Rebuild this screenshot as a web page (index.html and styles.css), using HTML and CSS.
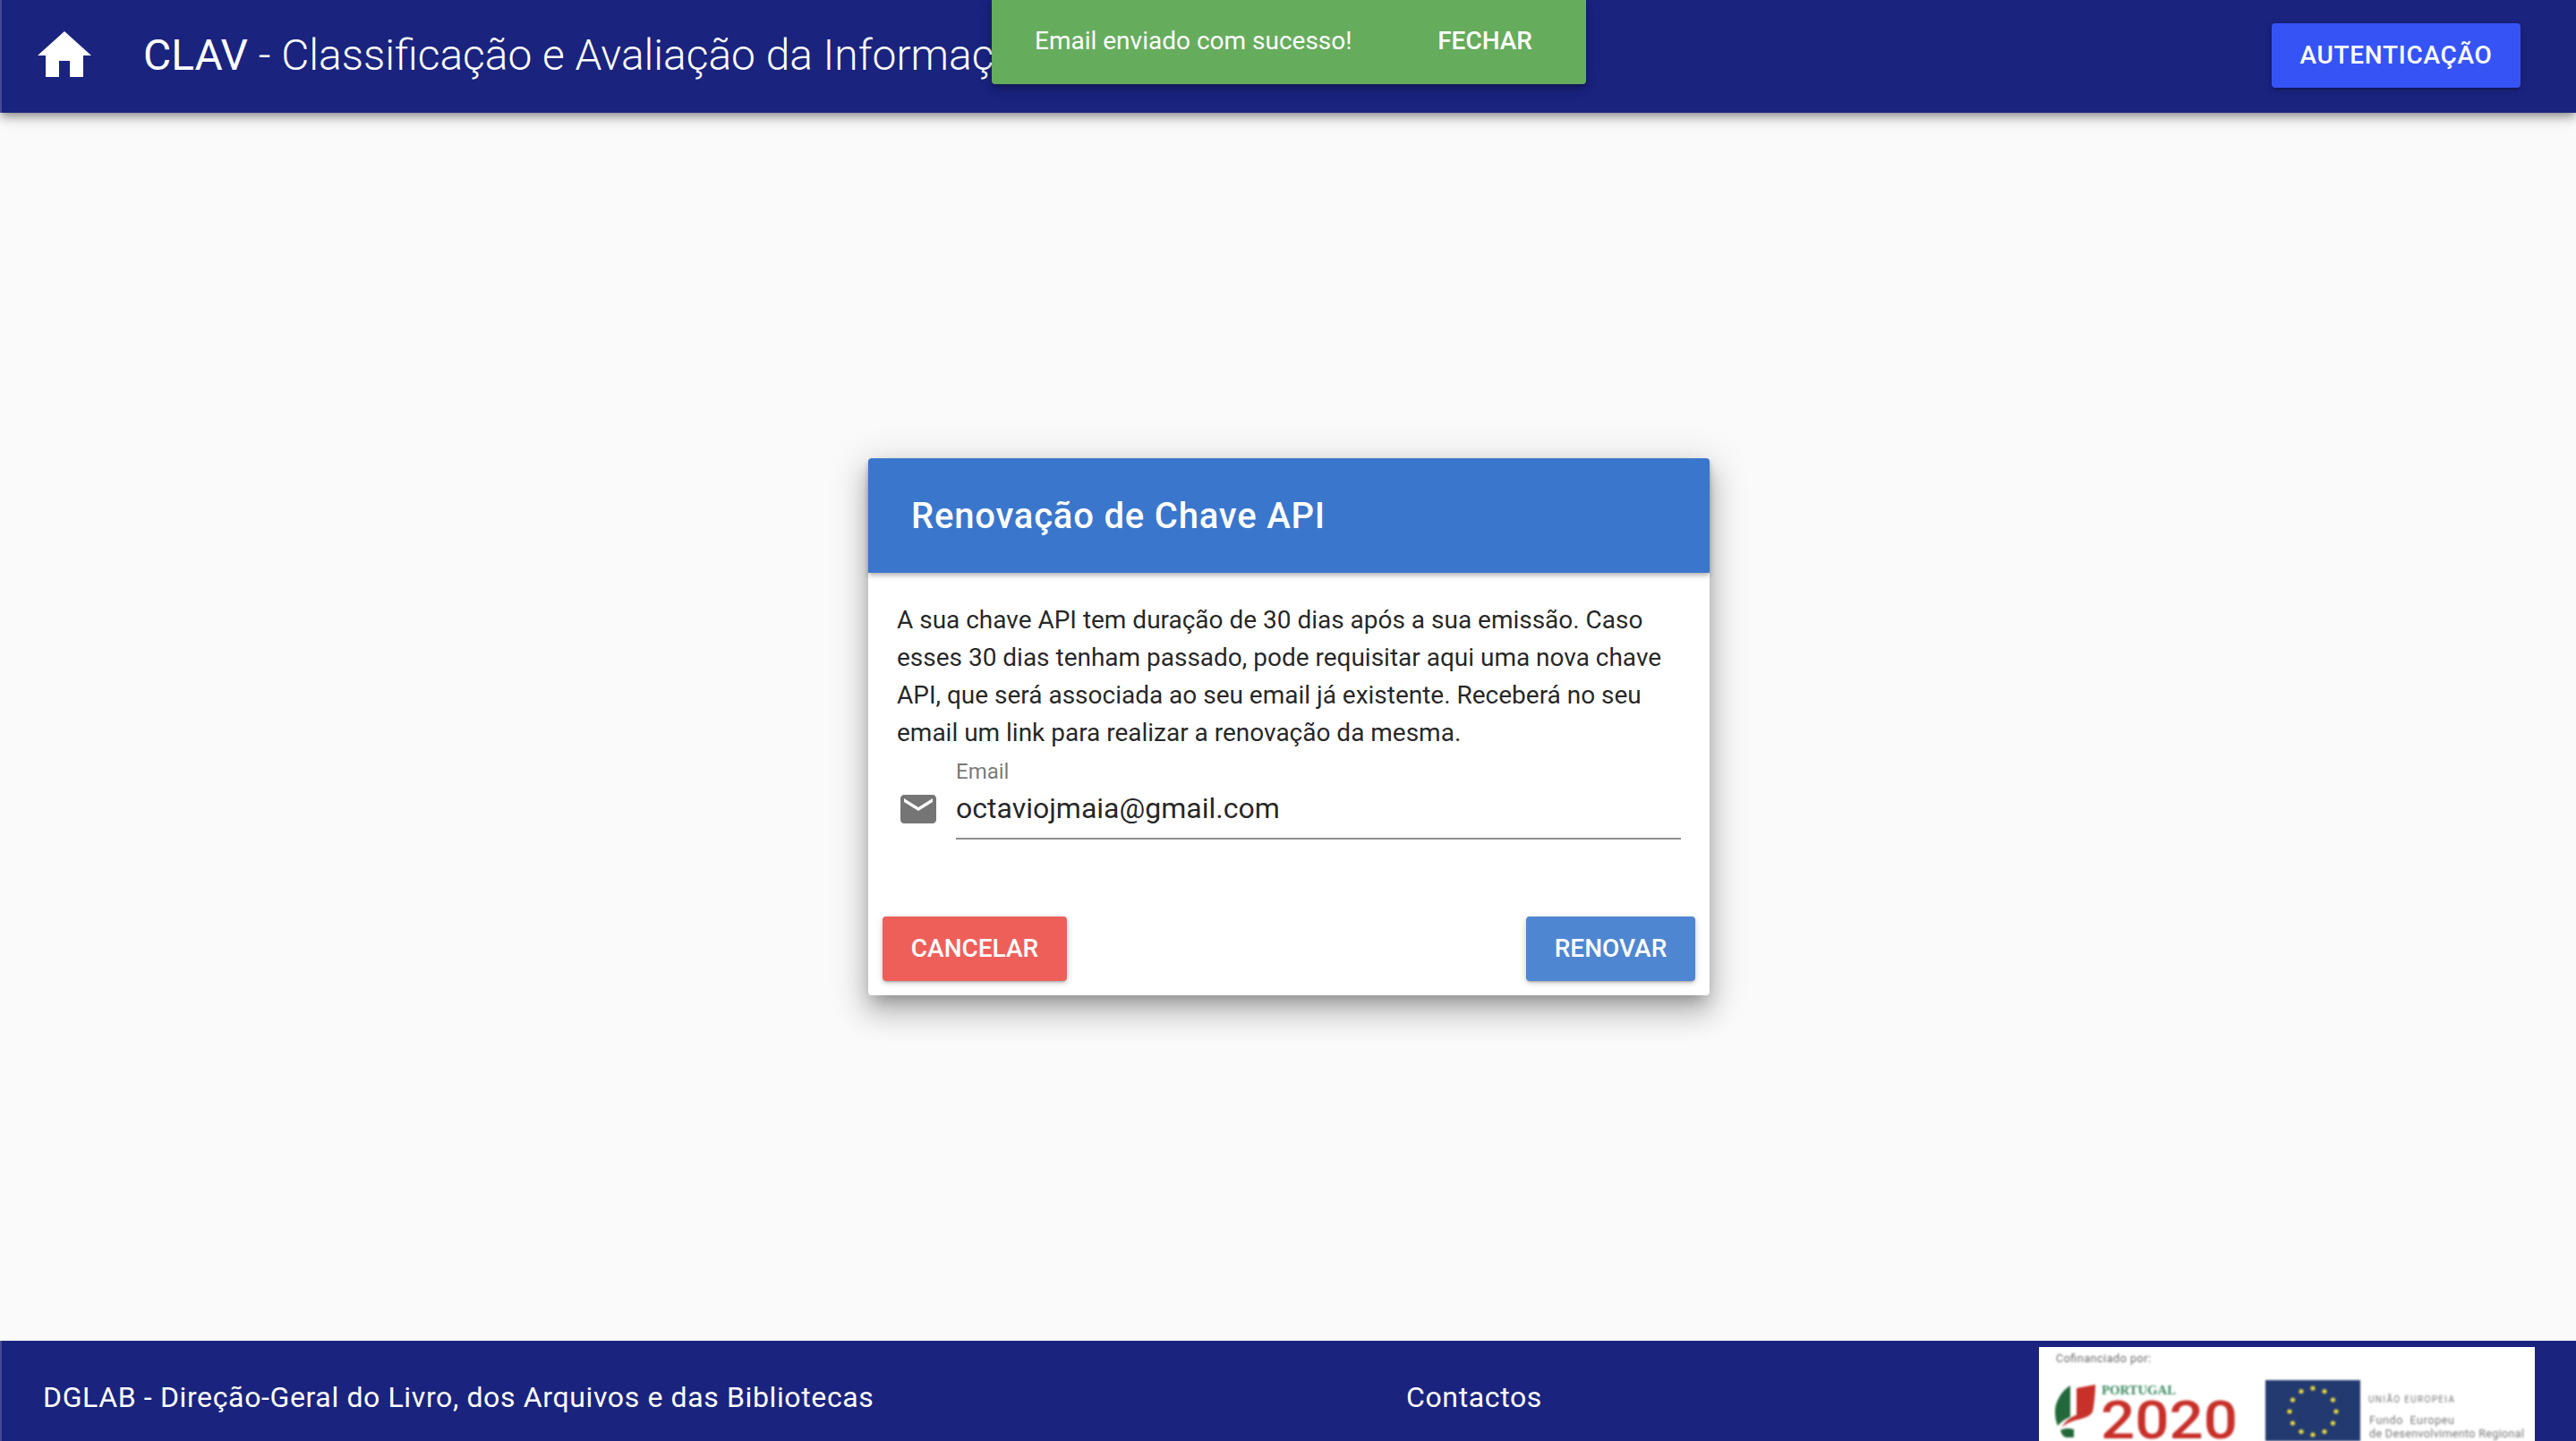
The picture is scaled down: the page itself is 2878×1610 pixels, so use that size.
FILE: index.html
```html
<!DOCTYPE html>
<html lang="pt">
<head>
<meta charset="utf-8">
<title>CLAV</title>
<link rel="stylesheet" href="styles.css">
</head>
<body>
<div class="app">
  <header class="toolbar">
    <svg class="home-icon" viewBox="0 0 24 24"><path d="M10 20v-6h4v6h5v-8h3L12 3 2 12h3v8z"/></svg>
    <div class="app-title"><span class="title-strong">CLAV</span> - Classificação e Avaliação da Informação</div>
    <button class="btn btn-auth">AUTENTICAÇÃO</button>
  </header>
  <div class="snackbar">
    <span class="snack-text">Email enviado com sucesso!</span>
    <span class="snack-action">FECHAR</span>
  </div>
  <main class="content">
    <section class="card">
      <div class="card-title">Renovação de Chave API</div>
      <div class="card-body">
        <p class="card-text">A sua chave API tem duração de 30 dias após a sua emissão. Caso esses 30 dias tenham passado, pode requisitar aqui uma nova chave API, que será associada ao seu email já existente. Receberá no seu email um link para realizar a renovação da mesma.</p>
        <div class="field">
          <svg class="mail-icon" viewBox="0 0 24 24"><path d="M20 4H4c-1.1 0-1.99.9-1.99 2L2 18c0 1.1.9 2 2 2h16c1.1 0 2-.9 2-2V6c0-1.1-.9-2-2-2zm0 4l-8 5-8-5V6l8 5 8-5v2z"/></svg>
          <div class="field-main">
            <label class="field-label">Email</label>
            <div class="field-value">octaviojmaia@gmail.com</div>
          </div>
        </div>
      </div>
      <div class="card-actions">
        <button class="btn btn-cancel">CANCELAR</button>
        <button class="btn btn-renew">RENOVAR</button>
      </div>
    </section>
  </main>
  <footer class="footer">
    <div class="foot-left">DGLAB - Direção-Geral do Livro, dos Arquivos e das Bibliotecas</div>
    <div class="foot-mid">Contactos</div>
    <div class="foot-logo">
      <svg class="logo-svg" viewBox="0 0 554 105">
        <text x="19" y="17" class="l-small" textLength="106">Cofinanciado por:</text>
        <path class="l-green" d="M35 43C24 50 18 62 18 72c0 6 1 12 3 16 5-6 10-8 14-10z"/>
        <path class="l-green" d="M24 93c6-3 11-2 15-1v9h-9c-3-1-5-4-6-8z"/>
        <path class="l-red" d="M42 46l21-4c0 8-1 20-3 30-2 6-12 8-20 10-6 2-12 5-15 8 5-8 11-12 17-14z"/>
        <text x="70" y="53" class="l-port" textLength="83" lengthAdjust="spacingAndGlyphs">PORTUGAL</text>
        <text x="69" y="102" class="l-2020" textLength="153" lengthAdjust="spacingAndGlyphs">2020</text>
        <rect class="l-flag" x="253" y="37" width="106" height="68"/>
        <g class="l-stars">
          <circle cx="306" cy="46" r="2.6"/><circle cx="319" cy="49.5" r="2.6"/><circle cx="328.500" cy="59" r="2.6"/>
          <circle cx="332" cy="72" r="2.6"/><circle cx="328.500" cy="85" r="2.6"/><circle cx="319" cy="94.500" r="2.6"/>
          <circle cx="306" cy="98" r="2.6"/><circle cx="293" cy="94.500" r="2.6"/><circle cx="283.500" cy="85" r="2.6"/>
          <circle cx="280" cy="72" r="2.6"/><circle cx="283.500" cy="59" r="2.6"/><circle cx="293" cy="49.500" r="2.6"/>
        </g>
        <text x="368" y="62" class="l-tiny" textLength="96">UNIÃO EUROPEIA</text>
        <text x="369" y="86" class="l-fund" textLength="95" xml:space="preserve">Fundo  Europeu</text>
        <text x="369" y="101" class="l-fund" textLength="173">de Desenvolvimento Regional</text>
      </svg>
    </div>
  </footer>
</div>
</body>
</html>
```
FILE: styles.css
```css
* { box-sizing: border-box; }
html, body { margin: 0; padding: 0; height: 100%; overflow: hidden; }
body { font-family: Roboto, "Liberation Sans", sans-serif; background: #fafafa; color: rgba(0,0,0,.87); }
.app { position: relative; display: flex; flex-direction: column; height: 1610px; }

.toolbar {
  height: 126px; flex: none; display: flex; align-items: flex-start; padding: 26px 62px 0 36px;
  background: #1a237e; color: #fff; position: relative; z-index: 2;
  box-shadow: inset 2px 0 0 rgba(255,255,255,.18), 0 4px 8px -2px rgba(0,0,0,.3), 0 8px 10px 0 rgba(0,0,0,.14), 0 2px 20px 0 rgba(0,0,0,.12);
}
.home-icon { width: 72px; height: 72px; fill: #fff; flex: none; }
.app-title { margin-left: 52px; font-size: 47.9px; line-height: 72px; font-weight: 300; white-space: nowrap; flex: 1; overflow: hidden; }
.title-strong { font-weight: 400; }

.btn {
  border: 0; border-radius: 4px; font-family: inherit; font-size: 28px; font-weight: 500;
  color: #fff; height: 72px; padding: 0 0 1px;
  box-shadow: 0 3px 2px -2px rgba(0,0,0,.2), 0 2px 4px 0 rgba(0,0,0,.14), 0 2px 10px 0 rgba(0,0,0,.12);
}
.btn-auth { background: #3654f6; flex: none; width: 278px; letter-spacing: .7px; }
.btn-cancel { background: #ef5f5a; width: 206px; }
.btn-renew { background: #4f86d2; width: 189px; }

.snackbar {
  position: absolute; top: 0; left: 1108px; width: 664px; height: 94px; z-index: 3;
  display: flex; align-items: center; justify-content: space-between; padding: 0 60px 4px 48px;
  background: #66ac5d; color: #fff; border-radius: 0 0 4px 4px; font-size: 28px;
  box-shadow: 0 3px 5px -1px rgba(0,0,0,.2), 0 6px 10px 0 rgba(0,0,0,.14), 0 1px 18px 0 rgba(0,0,0,.12);
}
.snack-action { font-weight: 500; }

.content { flex: 1; display: flex; justify-content: center; align-items: flex-start; padding: 386px 0 0 2px; }
.card {
  width: 940px; height: 600px; background: #fff; border-radius: 4px; display: flex; flex-direction: column;
  box-shadow: 0 10px 18px -6px rgba(0,0,0,.3), 0 20px 30px 4px rgba(0,0,0,.14), 0 8px 40px 8px rgba(0,0,0,.12);
}
.card-title {
  height: 128px; flex: none; display: flex; align-items: center; padding-left: 48px; background: #3a76cc; color: #fff;
  font-size: 40px; font-weight: 500; letter-spacing: .8px; border-radius: 4px 4px 0 0;
  box-shadow: 0 3px 5px -1px rgba(0,0,0,.25), 0 4px 6px 0 rgba(0,0,0,.1);
}
.card-body { flex: 1; padding: 32px 32px 0; }
.card-text { margin: 0; font-size: 28px; line-height: 42px; letter-spacing: -.01px; }
.field { display: flex; align-items: flex-end; gap: 18px; margin-top: -3px; }
.mail-icon { width: 48px; height: 48px; fill: #757575; flex: none; margin: 0 0 10px; }
.field-main { flex: 1; height: 101px; border-bottom: 2px solid #8e8e8e; padding-top: 8px; }
.field-label { display: block; font-size: 24px; line-height: 34px; color: rgba(0,0,0,.54); }
.field-value { font-size: 32px; line-height: 48px; }
.card-actions { flex: none; height: 88px; display: flex; justify-content: space-between; padding: 0 16px; }

.footer {
  height: 112px; flex: none; position: relative; background: #1a237e; color: #fff;
  font-size: 32px; letter-spacing: .63px; box-shadow: inset 2px 0 0 rgba(255,255,255,.18);
}
.foot-left { position: absolute; left: 48px; top: 44px; }
.foot-mid { position: absolute; left: 1571px; top: 44px; }
.foot-logo { position: absolute; left: 2278px; top: 7px; width: 554px; height: 105px; background: #fff; overflow: hidden; }
.logo-svg { display: block; width: 554px; height: 105px; filter: blur(.9px); }
.logo-svg text { font-family: Roboto, sans-serif; letter-spacing: 0; }
.l-small { font-size: 12.5px; fill: #666; }
.logo-svg .l-port { font-size: 15.5px; font-weight: 700; fill: #3a8a62; font-family: "Liberation Serif", serif; }
.l-2020 { font-size: 59px; font-weight: 500; fill: #c8302a; }
.l-tiny { font-size: 10px; fill: #777; }
.l-fund { font-size: 12.5px; fill: #777; }
.l-green { fill: #22683a; }
.l-red { fill: #c8302a; }
.l-flag { fill: #233a70; }
.l-stars circle { fill: #e8d73c; }
```
